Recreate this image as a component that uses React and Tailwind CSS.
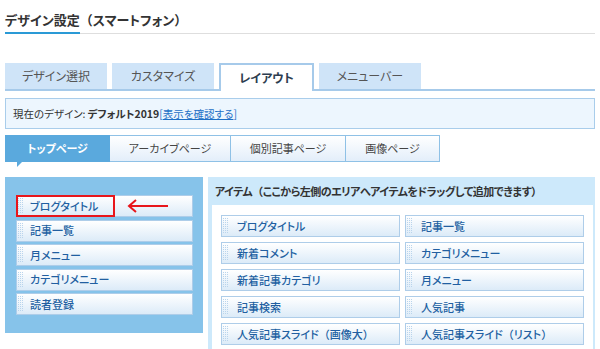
import React from "react";

const font = { fontFamily: '"Noto Sans CJK JP", "Noto Sans", sans-serif' };

function T({ text }) {
  const parts = text.split(/([（）])/);
  return (
    <>
      {parts.map((p, i) =>
        p === "（" || p === "）" ? (
          <span key={i} className="[font-feature-settings:normal]">
            {p}
          </span>
        ) : (
          <React.Fragment key={i}>{p}</React.Fragment>
        )
      )}
    </>
  );
}

function Grip() {
  return (
    <svg width="6" height="16" viewBox="0 0 6 16" className="shrink-0">
      {[0, 1, 2, 3, 4, 5, 6, 7].map((r) =>
        [0, 1, 2].map((c) => (
          <rect key={r + "-" + c} x={c * 2} y={r * 2} width="1" height="1" fill="#b9d4ec" />
        ))
      )}
    </svg>
  );
}

function Item({ label, gap }) {
  return (
    <div
      className={`relative h-[22px] flex items-center pl-[1px] ${gap} border border-[#aecde9] bg-gradient-to-b from-white to-[#dcebf8] text-[11px] font-medium text-[#215fa1] leading-none`}
    >
      <Grip />
      <span>
        <T text={label} />
      </span>
    </div>
  );
}

export default function App() {
  const mainTabs = ["デザイン選択", "カスタマイズ", "レイアウト", "メニューバー"];
  const subTabs = [
    { label: "トップページ", w: "w-[105px]" },
    { label: "アーカイブページ", w: "w-[122px]" },
    { label: "個別記事ページ", w: "w-[116px]" },
    { label: "画像ページ", w: "w-[95px]" },
  ];
  const leftItems = ["記事一覧", "月メニュー", "カテゴリメニュー", "読者登録"];
  const rightItems = [
    "ブログタイトル",
    "記事一覧",
    "新着コメント",
    "カテゴリメニュー",
    "新着記事カテゴリ",
    "月メニュー",
    "記事検索",
    "人気記事",
    "人気記事スライド（画像大）",
    "人気記事スライド（リスト）",
  ];

  return (
    <div
      className="w-[600px] h-[349px] overflow-hidden bg-white px-[5px] [font-feature-settings:'palt']"
      style={font}
    >
      {/* Title */}
      <div className="pt-[12px]">
        <h2 className="text-[13px] font-bold text-[#333] leading-[16px]">
          <T text="デザイン設定（スマートフォン）" />
        </h2>
        <div className="mt-[4px] flex items-end h-[2px]">
          <div className="w-[75px] h-[2px] bg-[#2a9ad6]" />
          <div className="flex-1 h-[1px] bg-[#dedede]" />
        </div>
      </div>

      {/* Main tabs */}
      <div className="mt-[29px] flex gap-[5px] h-[28px] border-b-2 border-[#a6caea]">
        {mainTabs.map((t, i) =>
          i === 2 ? (
            <div
              key={t}
              className="w-[95px] h-[28px] -mb-[2px] bg-white border-2 border-b-0 border-[#a6caea] flex items-center justify-center text-[12px] font-bold text-[#2d3d4f]"
            >
              {t}
            </div>
          ) : (
            <div
              key={t}
              className="w-[102px] h-[26px] bg-[#cfe4f8] flex items-center justify-center text-[12px] text-[#555]"
            >
              {t}
            </div>
          )
        )}
      </div>

      {/* Info box */}
      <div className="mt-[7px] h-[31px] border border-[#a9cdeb] bg-[#edf6fe] pl-[7px] flex items-center text-[10.5px] text-[#333]">
        <span>現在のデザイン: </span>
        <span className="font-bold ml-[2px]">デフォルト2019</span>
        <span className="text-[#1d6fc6]">
          [<span className="underline">表示を確認する</span>]
        </span>
      </div>

      {/* Sub tabs */}
      <div className="mt-[6px] flex h-[27px]">
        {subTabs.map((t, i) =>
          i === 0 ? (
            <div
              key={t.label}
              className={`relative ${t.w} h-[27px] bg-[#5aa9dd] border border-[#5aa9dd] flex items-center justify-center text-[11px] font-bold text-white`}
            >
              {t.label}
              <div className="absolute left-[11px] top-[26px] w-0 h-0 border-t-[5px] border-t-[#5aa9dd] border-r-[5px] border-r-transparent" />
            </div>
          ) : (
            <div
              key={t.label}
              className={`${t.w} h-[27px] -ml-px bg-gradient-to-b from-white to-[#e3eefa] border border-[#8fc1e6] flex items-center justify-center text-[11px] text-[#444]`}
            >
              {t.label}
            </div>
          )
        )}
      </div>

      {/* Panels */}
      <div className="mt-[15px] flex gap-[5px] items-start">
        {/* Left */}
        <div className="w-[198px] h-[156px] bg-[#86c3ea] pt-[18px] pl-[11px] pr-[10px] flex flex-col gap-[2.5px]">
          <div className="relative">
            <Item label="ブログタイトル" gap="gap-[6px]" />
            <div className="absolute left-0 top-0 w-[99px] h-[22px] border-2 border-[#e8161b]" />
            <svg
              className="absolute left-[111px] top-[4px]"
              width="42"
              height="14"
              viewBox="0 0 42 14"
            >
              <path d="M41 7 H2" stroke="#e8161b" strokeWidth="2" fill="none" />
              <path d="M9 1 L2 7 L9 13" stroke="#e8161b" strokeWidth="2" fill="none" />
            </svg>
          </div>
          {leftItems.map((l) => (
            <Item key={l} label={l} gap="gap-[6px]" />
          ))}
        </div>

        {/* Right */}
        <div className="flex-1 bg-[#cde9fb] pl-[4px] pr-[2px]">
          <div className="h-[28px] flex items-center pl-[3px] text-[11px] font-bold text-[#333] tracking-[-0.5px]">
            <T text="アイテム（ここから左側のエリアへアイテムをドラッグして追加できます）" />
          </div>
          <div className="bg-white pt-[10px] px-[9px] pb-[10px] grid grid-cols-2 gap-x-[5px] gap-y-[5px]">
            {rightItems.map((r, i) => (
              <Item key={i} label={r} gap="gap-[8px]" />
            ))}
          </div>
        </div>
      </div>
    </div>
  );
}
